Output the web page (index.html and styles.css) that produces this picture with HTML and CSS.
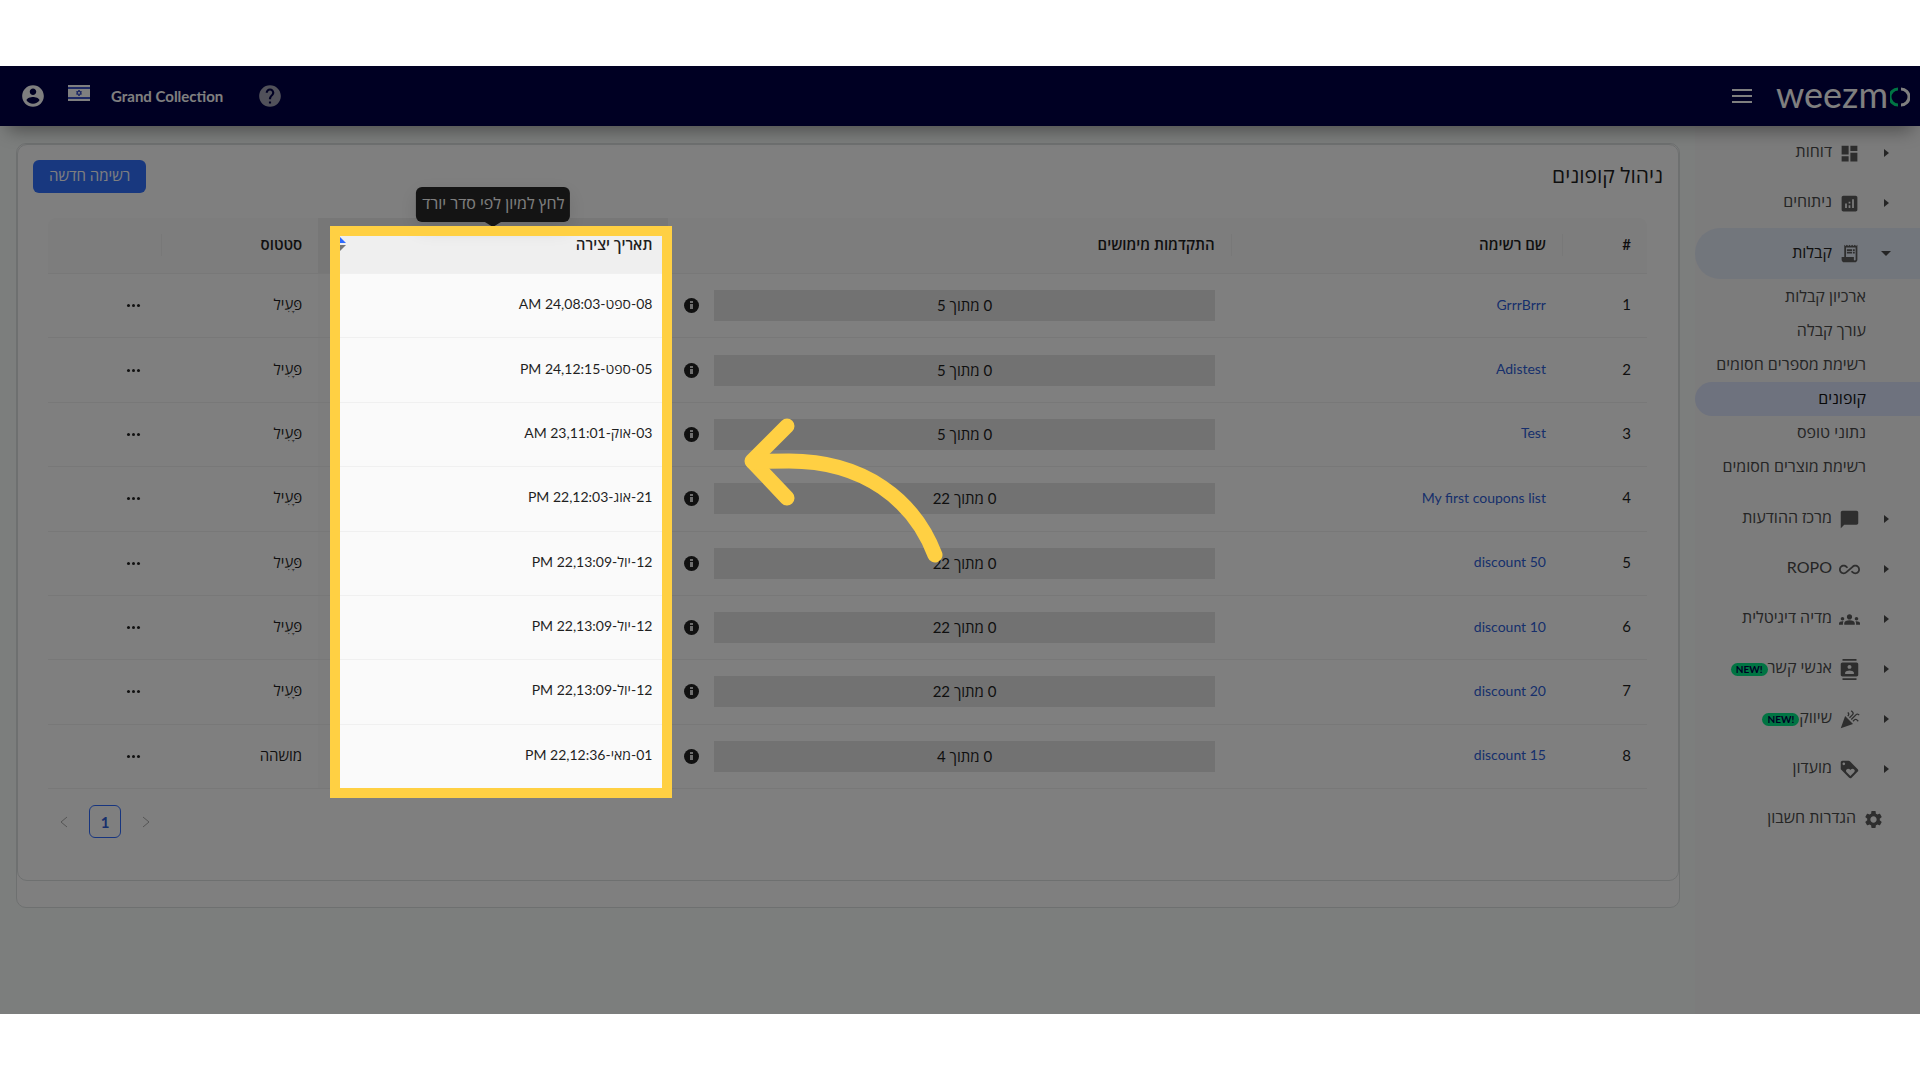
FILE: index.html
```html
<!DOCTYPE html>
<html lang="he" dir="rtl">
<head>
<meta charset="utf-8">
<title>ניהול קופונים</title>
<link rel="stylesheet" href="styles.css">
</head>
<body>
<div class="app">
  <header class="topbar">
    <a class="logo" href="#" dir="ltr" aria-label="weezmo">weezm<svg width="20" height="20" viewBox="0 0 20 20" fill="none" stroke-width="3"><path d="M8 2A8 8 0 0 0 8 18" stroke="#00e887"/><path d="M11 2A8 8 0 0 1 11 18" stroke="#fff"/></svg></a>
    <button class="icon-btn" aria-label="תפריט"><svg width="20" height="16" viewBox="0 0 20 16" stroke="#fff" stroke-width="2"><path d="M0 2h20M0 8h20M0 14h20"/></svg></button>
    <div class="account">
      <button class="icon-btn" aria-label="עזרה"><svg width="26" height="26" viewBox="0 0 24 24" fill="#a3a3b5"><path d="M12 2C6.480 2 2 6.480 2 12s4.480 10 10 10 10-4.480 10-10S17.520 2 12 2zm1 17h-2v-2h2v2zm2.070-7.750l-.9.920C13.450 12.900 13 13.500 13 15h-2v-.5c0-1.100.45-2.100 1.170-2.830l1.240-1.260c.37-.36.59-.86.59-1.410 0-1.100-.9-2-2-2s-2 .9-2 2H8c0-2.210 1.790-4 4-4s4 1.790 4 4c0 .88-.36 1.680-.93 2.250z"/></svg></button>
      <span class="account-name">Grand Collection</span>
      <svg class="flag" width="22" height="16" viewBox="0 0 22 16"><path fill="#fff" d="M0 0h22v16H0z"/><path fill="#3a50c8" d="M0 2h22v2H0zM0 12h22v2H0z"/><path fill="none" stroke="#3a50c8" d="M11 5l2.500 4.200h-5zM11 11L8.500 6.600h5z"/></svg>
      <button class="icon-btn" aria-label="פרופיל"><svg width="26" height="26" viewBox="0 0 24 24" fill="#fff"><path d="M12 2C6.480 2 2 6.480 2 12s4.480 10 10 10 10-4.480 10-10S17.520 2 12 2zm0 3c1.660 0 3 1.340 3 3s-1.340 3-3 3-3-1.340-3-3 1.340-3 3-3zm0 14.200c-2.500 0-4.710-1.280-6-3.220.03-1.990 4-3.080 6-3.080 1.990 0 5.970 1.090 6 3.080-1.290 1.940-3.500 3.220-6 3.220z"/></svg></button>
    </div>
  </header>
  <div class="body">
    <nav class="sidebar">
      <a class="nav-item" href="#"><i class="caret"></i><svg class="nav-icon" viewBox="0 0 24 24"><path d="M3 13h8V3H3v10zm0 8h8v-6H3v6zm10 0h8V11h-8v10zm0-18v6h8V3h-8z"/></svg><span>דוחות</span></a>
      <a class="nav-item" href="#"><i class="caret"></i><svg class="nav-icon" viewBox="0 0 24 24"><path d="M19 3H5c-1.100 0-2 .9-2 2v14c0 1.100.9 2 2 2h14c1.100 0 2-.9 2-2V5c0-1.100-.9-2-2-2zM9 17H7v-5h2v5zm4 0h-2v-3h2v3zm0-5h-2v-2h2v2zm4 5h-2V7h2v10z"/></svg><span>ניתוחים</span></a>
      <a class="nav-item nav-open" href="#"><i class="caret"></i><svg class="nav-icon" viewBox="0 0 24 24"><path d="M19.500 3.500L18 2l-1.500 1.500L15 2l-1.500 1.500L12 2l-1.500 1.500L9 2 7.500 3.500 6 2v14H3v3c0 1.660 1.340 3 3 3h12c1.660 0 3-1.340 3-3V2l-1.500 1.500zM19 19c0 .55-.45 1-1 1s-1-.45-1-1v-3H8V5h11v14z"/><path d="M9 7h6v2H9zM16 7h2v2h-2zM9 10h6v2H9zM16 10h2v2h-2z"/></svg><span>קבלות</span></a>
      <div class="subnav">
        <a href="#">ארכיון קבלות</a>
        <a href="#">עורך קבלה</a>
        <a href="#">רשימת מספרים חסומים</a>
        <a class="current" href="#">קופונים</a>
        <a href="#">נתוני טופס</a>
        <a href="#">רשימת מוצרים חסומים</a>
      </div>
      <a class="nav-item" href="#"><i class="caret"></i><svg class="nav-icon" viewBox="0 0 24 24"><path d="M22 4c0-1.100-.9-2-2-2H4c-1.100 0-2 .9-2 2v18l4-4h14c1.100 0 2-.9 2-2V4z" transform="rotate(0)"/></svg><span>מרכז ההודעות</span></a>
      <a class="nav-item" href="#"><i class="caret"></i><svg class="nav-icon" viewBox="0 0 24 24"><path d="M18.600 6.620c-1.440 0-2.800.56-3.770 1.530L7.800 14.390c-.64.64-1.490.99-2.400.99-1.870 0-3.390-1.510-3.390-3.380S3.530 8.620 5.400 8.620c.91 0 1.760.35 2.440 1.030l1.130 1 1.510-1.340L9.220 8.200C8.200 7.180 6.840 6.620 5.400 6.620 2.420 6.620 0 9.040 0 12s2.420 5.380 5.400 5.380c1.440 0 2.800-.56 3.770-1.530l7.030-6.240c.64-.64 1.490-.99 2.400-.99 1.870 0 3.390 1.510 3.390 3.380s-1.520 3.380-3.390 3.380c-.9 0-1.760-.35-2.440-1.030l-1.140-1.010-1.510 1.340 1.270 1.120c1.020 1.010 2.370 1.570 3.820 1.570 2.980 0 5.400-2.410 5.400-5.380s-2.420-5.370-5.400-5.370z"/></svg><span>ROPO</span></a>
      <a class="nav-item" href="#"><i class="caret"></i><svg class="nav-icon" viewBox="0 0 24 24"><path d="M12 12.750c1.630 0 3.070.39 4.240.9 1.080.48 1.760 1.560 1.760 2.730V18H6v-1.610c0-1.180.68-2.260 1.760-2.730 1.170-.52 2.610-.91 4.240-.91zM4 13c1.100 0 2-.9 2-2s-.9-2-2-2-2 .9-2 2 .9 2 2 2zm1.130 1.100C4.760 14.040 4.390 14 4 14c-.99 0-1.930.21-2.780.58C.48 14.900 0 15.620 0 16.430V18h4.500v-1.610c0-.83.23-1.610.63-2.290zM20 13c1.100 0 2-.9 2-2s-.9-2-2-2-2 .9-2 2 .9 2 2 2zm4 3.430c0-.81-.48-1.530-1.220-1.850C21.930 14.210 20.990 14 20 14c-.39 0-.76.04-1.130.1.4.68.63 1.460.63 2.290V18H24v-1.570zM12 6c1.660 0 3 1.340 3 3s-1.340 3-3 3-3-1.340-3-3 1.340-3 3-3z"/></svg><span>מדיה דיגיטלית</span></a>
      <a class="nav-item" href="#"><i class="caret"></i><svg class="nav-icon" viewBox="0 0 24 24"><path d="M20 0H4v2h16V0zM4 24h16v-2H4v2zM20 4H4c-1.100 0-2 .9-2 2v12c0 1.100.9 2 2 2h16c1.100 0 2-.9 2-2V6c0-1.100-.9-2-2-2zm-8 2.750c1.240 0 2.250 1.010 2.250 2.250s-1.010 2.250-2.250 2.250S9.750 10.240 9.750 9 10.760 6.750 12 6.750zM17 17H7v-1.500c0-1.670 3.330-2.500 5-2.500s5 .83 5 2.500V17z"/></svg><span>אנשי קשר</span><b class="badge" dir="ltr">NEW!</b></a>
      <a class="nav-item" href="#"><i class="caret"></i><svg class="nav-icon" viewBox="0 0 24 24"><path d="M2 22l14-5-9-9zM14.530 12.530l5.590-5.590c.49-.49 1.280-.49 1.770 0l.59.590 1.060-1.060-.59-.590c-1.070-1.070-2.820-1.070-3.890 0l-5.590 5.590 1.060 1.060zM10.060 6.880l-.59.590 1.060 1.060.59-.590c1.070-1.070 1.070-2.820 0-3.890l-.59-.590-1.060 1.070.59.590c.48.480.48 1.280 0 1.760zM17.060 11.880l-1.590 1.590 1.060 1.060 1.590-1.590c.49-.49 1.280-.49 1.770 0l1.610 1.610 1.060-1.060-1.610-1.610c-1.080-1.070-2.820-1.070-3.890 0zM15.060 5.880l-3.590 3.590 1.060 1.060 3.590-3.590c1.070-1.070 1.070-2.820 0-3.890l-1.590-1.590-1.060 1.060 1.590 1.590c.48.490.48 1.290 0 1.770z"/></svg><span>שיווק</span><b class="badge" dir="ltr">NEW!</b></a>
      <a class="nav-item" href="#"><i class="caret"></i><svg class="nav-icon" viewBox="0 0 24 24"><path d="M21.410 11.580l-9-9C12.050 2.220 11.550 2 11 2H4c-1.100 0-2 .9-2 2v7c0 .55.22 1.050.59 1.420l9 9c.36.36.86.58 1.410.58s1.050-.22 1.410-.59l7-7c.37-.36.59-.86.59-1.410s-.23-1.060-.59-1.420zM5.500 7C4.670 7 4 6.330 4 5.500S4.670 4 5.500 4 7 4.670 7 5.500 6.330 7 5.500 7zm11.770 8.270L13 19.540l-4.270-4.270C8.280 14.810 8 14.190 8 13.500c0-1.380 1.120-2.500 2.500-2.500.69 0 1.320.28 1.770.74l.73.72.73-.73c.45-.45 1.080-.73 1.770-.73 1.380 0 2.500 1.120 2.500 2.500 0 .69-.28 1.320-.73 1.770z"/></svg><span>מועדון</span></a>
      <a class="nav-item nav-plain" href="#"><svg class="nav-icon" viewBox="0 0 24 24"><path d="M19.140 12.940c.04-.3.060-.61.060-.94 0-.32-.02-.64-.07-.94l2.030-1.580c.18-.14.23-.41.12-.61l-1.920-3.320c-.12-.22-.37-.29-.59-.22l-2.390.96c-.5-.38-1.030-.7-1.620-.94l-.36-2.540c-.04-.24-.24-.41-.48-.41h-3.840c-.24 0-.43.17-.47.41l-.36 2.540c-.59.240-1.130.57-1.620.94l-2.390-.96c-.22-.08-.47 0-.59.220L2.740 8.870c-.12.210-.08.470.12.610l2.030 1.580c-.05.300-.09.630-.09.940s.02.640.07.940l-2.030 1.580c-.18.140-.23.410-.12.610l1.920 3.320c.12.220.37.290.59.220l2.390-.96c.5.380 1.030.7 1.620.94l.36 2.540c.05.240.24.410.48.410h3.840c.24 0 .44-.17.47-.41l.36-2.540c.59-.24 1.130-.56 1.620-.94l2.390.96c.22.080.47 0 .59-.22l1.920-3.320c.12-.22.070-.47-.12-.61l-2.010-1.580zM12 15.600c-1.980 0-3.600-1.620-3.600-3.600s1.620-3.600 3.600-3.600 3.600 1.620 3.600 3.600-1.620 3.600-3.600 3.600z"/></svg><span>הגדרות חשבון</span></a>
    </nav>
    <main class="content">
      <div class="panel">
        <section class="card">
          <div class="card-head">
            <h1>ניהול קופונים</h1>
            <button class="primary">רשימה חדשה</button>
          </div>
          <div class="table-wrap">
            <table class="coupons">
              <colgroup><col class="c-num"><col class="c-name"><col class="c-progress"><col class="c-date"><col class="c-status"><col class="c-actions"></colgroup>
              <thead>
                <tr>
                  <th class="split">#</th>
                  <th class="split">שם רשימה</th>
                  <th>התקדמות מימושים</th>
                  <th class="sorted">
                    <div class="sort-head"><span>תאריך יצירה</span><svg class="sorter" width="12" height="14" viewBox="0 0 12 14"><path fill="#2f6bff" d="M6 0l6 6H0z"/><path fill="#777" d="M0 8h12l-6 6z"/></svg></div>
                    <div class="tooltip" role="tooltip">לחץ למיון לפי סדר יורד</div>
                    <div class="spotlight"><svg class="pointer" width="208" height="160" viewBox="0 0 208 160" fill="none" stroke="#ffd043" stroke-width="15" stroke-linecap="round" stroke-linejoin="round"><path d="M48 16L13 51l35 37"/><path d="M196 145C175 90 125 51 50 51C38 51 26 51 14 52"/></svg></div>
                  </th>
                  <th class="split">סטטוס</th>
                  <th></th>
                </tr>
              </thead>
              <tbody>
                <tr><td>1</td><td><a href="#">GrrrBrrr</a></td><td class="usage"><div class="progress"><span class="bar">0 מתוך 5</span><i class="info"></i></div></td><td class="sorted">08-ספט-24,08:03 AM</td><td>פָּעִיל</td><td class="actions"><button class="more" aria-label="פעולות"></button></td></tr>
                <tr><td>2</td><td><a href="#">Adistest</a></td><td class="usage"><div class="progress"><span class="bar">0 מתוך 5</span><i class="info"></i></div></td><td class="sorted">05-ספט-24,12:15 PM</td><td>פָּעִיל</td><td class="actions"><button class="more" aria-label="פעולות"></button></td></tr>
                <tr><td>3</td><td><a href="#">Test</a></td><td class="usage"><div class="progress"><span class="bar">0 מתוך 5</span><i class="info"></i></div></td><td class="sorted">03-אוק-23,11:01 AM</td><td>פָּעִיל</td><td class="actions"><button class="more" aria-label="פעולות"></button></td></tr>
                <tr><td>4</td><td><a href="#">My first coupons list</a></td><td class="usage"><div class="progress"><span class="bar">0 מתוך 22</span><i class="info"></i></div></td><td class="sorted">21-אוג-22,12:03 PM</td><td>פָּעִיל</td><td class="actions"><button class="more" aria-label="פעולות"></button></td></tr>
                <tr><td>5</td><td><a href="#" dir="ltr">discount 50</a></td><td class="usage"><div class="progress"><span class="bar">0 מתוך 22</span><i class="info"></i></div></td><td class="sorted">12-יול-22,13:09 PM</td><td>פָּעִיל</td><td class="actions"><button class="more" aria-label="פעולות"></button></td></tr>
                <tr><td>6</td><td><a href="#" dir="ltr">discount 10</a></td><td class="usage"><div class="progress"><span class="bar">0 מתוך 22</span><i class="info"></i></div></td><td class="sorted">12-יול-22,13:09 PM</td><td>פָּעִיל</td><td class="actions"><button class="more" aria-label="פעולות"></button></td></tr>
                <tr><td>7</td><td><a href="#" dir="ltr">discount 20</a></td><td class="usage"><div class="progress"><span class="bar">0 מתוך 22</span><i class="info"></i></div></td><td class="sorted">12-יול-22,13:09 PM</td><td>פָּעִיל</td><td class="actions"><button class="more" aria-label="פעולות"></button></td></tr>
                <tr><td>8</td><td><a href="#" dir="ltr">discount 15</a></td><td class="usage"><div class="progress"><span class="bar">0 מתוך 4</span><i class="info"></i></div></td><td class="sorted">01-מאי-22,12:36 PM</td><td>מושהה</td><td class="actions"><button class="more" aria-label="פעולות"></button></td></tr>
              </tbody>
            </table>
            <div class="pager">
              <button class="page-step" aria-label="הקודם"><svg width="8" height="12" viewBox="0 0 8 12"><path d="M1 1l6 5-6 5"/></svg></button>
              <button class="page-current">1</button>
              <button class="page-step" aria-label="הבא"><svg width="8" height="12" viewBox="0 0 8 12"><path d="M7 1L1 6l6 5"/></svg></button>
            </div>
          </div>
        </section>
      </div>
    </main>
  </div>
</div>
</body>
</html>
```
FILE: styles.css
```css
* { box-sizing: border-box; }

body {
  margin: 66px 0;
  background: #fff;
  color: #1f1f1f;
  font: 15px/20px Lato, "Open Sans", "DejaVu Sans", sans-serif;
}

a { color: inherit; text-decoration: none; }
button { font: inherit; border: 0; padding: 0; background: none; }
svg { display: block; flex: none; }

.app {
  position: relative;
  display: flex;
  flex-direction: column;
  min-height: calc(100vh - 132px);
  overflow: hidden;
  background: #f8fcfa;
}

/* Top bar */
.topbar {
  position: relative;
  z-index: 1;
  display: flex;
  align-items: center;
  height: 60px;
  padding: 0 10px 0 20px;
  background: #000046;
  color: #fff;
  box-shadow: 0 12px 18px -8px rgba(0, 0, 0, .4);
}
.logo {
  display: flex;
  align-items: center;
  gap: 2px;
  padding-bottom: 4px;
  margin-left: 24px;
  font-size: 36px;
  line-height: 40px;
}
.logo svg { margin-top: 6px; }
.account {
  display: flex;
  align-items: center;
  margin-right: auto;
}
.account-name { margin: 0 34px 0 21px; font-weight: 700; }
.flag { margin: 0 0 6px 22px; }

/* Layout */
.body { display: flex; flex: 1; }
.content { flex: 1; min-width: 0; padding: 17px 15px 17px 16px; }

/* Sidebar */
.sidebar {
  flex: none;
  width: 225px;
  padding-top: 2px;
  background: #f8f8f8;
  color: #4a4a4a;
  font-size: 16px;
}
.nav-item {
  display: flex;
  align-items: center;
  height: 50px;
  padding-right: 31px;
}
.nav-item span { margin: 0 7px 4px 0; }
.nav-icon { width: 21px; height: 21px; fill: #5c5c5c; }
.caret {
  width: 5px;
  margin-left: 24px;
  border-left: 5px solid #4a4a4a;
  border-block: 4px solid transparent;
  border-right: 0;
}
.nav-plain { padding-right: 36px; }
.nav-open {
  height: 51px;
  padding-right: 29px;
  border-radius: 25px 0 0 25px;
  background: #e5ecf8;
  color: #222;
}
.nav-open .caret {
  width: 10px;
  margin-left: 21px;
  border-inline: 5px solid transparent;
  border-top: 5px solid #4a4a4a;
  border-bottom: 0;
}
.subnav { padding: 1px 0 10px; }
.subnav a {
  display: block;
  height: 34px;
  padding: 6px 54px 8px 0;
}
.subnav .current {
  border-radius: 17px 0 0 17px;
  background: #dce4fc;
  color: #111;
}
.badge {
  padding: 0 5px;
  border-radius: 7px;
  background: #00e887;
  color: #000046;
  font-size: 10px;
  line-height: 13px;
}

/* Card */
.panel {
  padding-bottom: 26px;
  border: 1px solid #dce0e0;
  border-radius: 10px;
  background: #fff;
}
.card {
  padding: 15px 15px 42px;
  border: 1px solid #dce0e0;
  border-radius: 10px;
}
.card-head {
  display: flex;
  align-items: flex-start;
  justify-content: space-between;
  margin-bottom: 25px;
}
h1 { margin: 0; font-size: 21px; line-height: 29px; font-weight: 400; }
.primary {
  height: 33px;
  padding: 0 16px 4px;
  border-radius: 6px;
  background: #3070fe;
  color: #fff;
}

/* Table */
.table-wrap { padding: 0 16px 0 15px; }
.coupons {
  width: 100%;
  height: 571px;
  table-layout: fixed;
  border-collapse: separate;
  border-spacing: 0;
}
.c-num { width: 85px; }
.c-name { width: 331px; }
.c-progress { width: 562px; }
.c-date { width: 350px; }
.c-status { width: 157px; }
.c-actions { width: 113px; }
th, td {
  padding: 0 16px 3px;
  border-bottom: 1px solid #f0f0f0;
  text-align: right;
}
th {
  position: relative;
  height: 56px;
  background: #fafafa;
  font-weight: 600;
}
th:first-child { border-top-right-radius: 8px; }
th:last-child { border-top-left-radius: 8px; }
.split::after {
  content: "";
  position: absolute;
  left: 0;
  top: 16px;
  width: 1px;
  height: 22px;
  background: #f0f0f0;
}
td.sorted { background: #fafafa; font-size: 14px; }
th.sorted { background: #efefef; }
td a { color: #2f5fd8; font-size: 14px; }
.sort-head {
  display: flex;
  align-items: center;
  justify-content: space-between;
}
td.usage { padding-bottom: 0; }
.progress { display: flex; align-items: center; gap: 15px; }
.bar {
  flex: 1;
  height: 31px;
  background: #e4e4e4;
  line-height: 30px;
  text-align: center;
}
.info {
  position: relative;
  width: 15px;
  height: 15px;
  border-radius: 50%;
  background: #222;
}
.info::before {
  content: "";
  position: absolute;
  left: 6px;
  top: 3px;
  width: 3px;
  height: 2px;
  background: #ddd;
}
.info::after {
  content: "";
  position: absolute;
  left: 6px;
  top: 6px;
  width: 3px;
  height: 5px;
  background: #ddd;
}
td.actions { padding: 0 26px 0 0; }
.more {
  display: block;
  width: 3px;
  height: 3px;
  border-radius: 50%;
  background: #222;
  box-shadow: -5px 0 #222, 5px 0 #222;
}

/* Tooltip and guided-tour highlight */
.tooltip {
  position: absolute;
  left: 50%;
  bottom: calc(100% - 4px);
  transform: translateX(-50%);
  height: 35px;
  padding: 6px 6px 9px;
  border-radius: 6px;
  background: #282828;
  box-shadow: 0 6px 20px rgba(0, 0, 0, .12);
  color: #fff;
  font-size: 16px;
  font-weight: 400;
  white-space: nowrap;
}
.tooltip::after {
  content: "";
  position: absolute;
  left: 50%;
  top: 100%;
  margin-left: -8px;
  border: 8px solid transparent;
  border-top: 5px solid #282828;
  border-bottom: 0;
}
.spotlight {
  position: absolute;
  z-index: 10;
  left: 12px;
  right: -4px;
  top: 8px;
  height: 572px;
  border: 10px solid #ffd043;
  box-shadow: 0 0 0 3000px rgba(0, 0, 0, .5);
}
.pointer { position: absolute; left: 100%; top: 174px; margin-left: 77px; }

/* Pagination */
.pager {
  display: flex;
  justify-content: flex-end;
  gap: 9px;
  padding-top: 16px;
}
.pager button {
  display: grid;
  place-items: center;
  width: 32px;
  height: 33px;
}
.pager svg { fill: none; stroke: #aaa; stroke-width: 1; }
.pager .page-current {
  border: 1px solid #2f6bff;
  border-radius: 6px;
  color: #2f5fd8;
  font-weight: 700;
}
```
